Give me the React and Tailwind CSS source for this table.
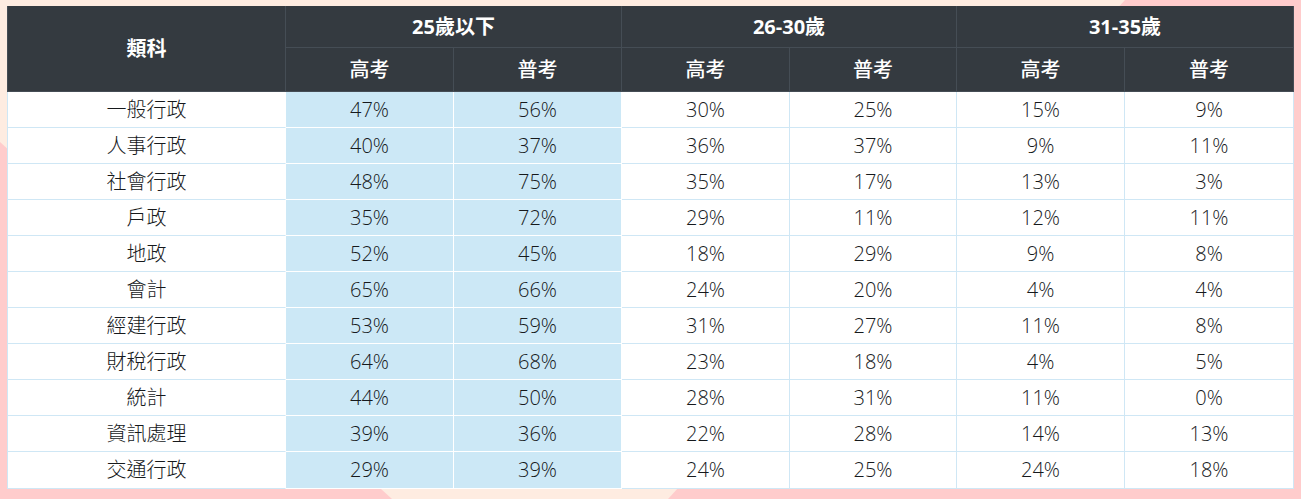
const groups = ['25歲以下', '26-30歲', '31-35歲']

const rows = [
  ['一般行政', '47%', '56%', '30%', '25%', '15%', '9%'],
  ['人事行政', '40%', '37%', '36%', '37%', '9%', '11%'],
  ['社會行政', '48%', '75%', '35%', '17%', '13%', '3%'],
  ['戶政', '35%', '72%', '29%', '11%', '12%', '11%'],
  ['地政', '52%', '45%', '18%', '29%', '9%', '8%'],
  ['會計', '65%', '66%', '24%', '20%', '4%', '4%'],
  ['經建行政', '53%', '59%', '31%', '27%', '11%', '8%'],
  ['財稅行政', '64%', '68%', '23%', '18%', '4%', '5%'],
  ['統計', '44%', '50%', '28%', '31%', '11%', '0%'],
  ['資訊處理', '39%', '36%', '22%', '28%', '14%', '13%'],
  ['交通行政', '29%', '39%', '24%', '25%', '24%', '18%'],
]

export default function App() {
  return (
    <div
      className="relative w-[1301px] h-[499px] overflow-hidden bg-[#ffcccc]"
      style={{ fontFamily: '"Open Sans", "Noto Sans CJK TC", sans-serif' }}
    >
      {/* background decoration */}
      <svg className="absolute inset-0" width="1301" height="499" viewBox="0 0 1301 499">
        <polygon points="0,0 1125,0 668,499 392,499 0,142" fill="#feece1" />
      </svg>

      <div className="relative pt-[6px] pl-[7px]">
        <table className="w-[1287px] table-fixed border-separate border-spacing-0 text-[20px]">
          <colgroup>
            <col className="w-[279px]" />
            <col className="w-[168px]" />
            <col className="w-[168px]" />
            <col className="w-[168px]" />
            <col className="w-[167px]" />
            <col className="w-[168px]" />
            <col className="w-[169px]" />
          </colgroup>
          <thead className="bg-[#343a40] text-white">
            <tr className="h-[42px]">
              <th
                rowSpan={2}
                className="border-l border-r border-b border-[#454d55] font-bold text-center"
              >
                類科
              </th>
              {groups.map((g) => (
                <th
                  key={g}
                  colSpan={2}
                  className="border-r border-b border-[#454d55] font-bold text-center"
                >
                  {g}
                </th>
              ))}
            </tr>
            <tr className="h-[44px]">
              {groups.map((g) => (
                <>
                  <th key={g + 'a'} className="border-r border-b border-[#454d55] font-medium text-center">
                    高考
                  </th>
                  <th key={g + 'b'} className="border-r border-b border-[#454d55] font-medium text-center">
                    普考
                  </th>
                </>
              ))}
            </tr>
          </thead>
          <tbody className="bg-white text-[#16191c] font-light">
            {rows.map((r, ri) => (
              <tr key={r[0]} className={ri === rows.length - 1 ? 'h-[37px]' : 'h-[36px]'}>
                <td className="border-l border-r border-b border-l-[#cfe7f5] border-r-white border-b-[#cfe7f5] text-center">
                  {r[0]}
                </td>
                {r.slice(1).map((v, i) => (
                  <td
                    key={i}
                    className={
                      i < 2
                        ? 'border-r border-b border-white bg-[#cce8f6] text-center'
                        : 'border-r border-b border-[#cfe7f5] text-center'
                    }
                  >
                    {v}
                  </td>
                ))}
              </tr>
            ))}
          </tbody>
        </table>
      </div>
    </div>
  )
}
